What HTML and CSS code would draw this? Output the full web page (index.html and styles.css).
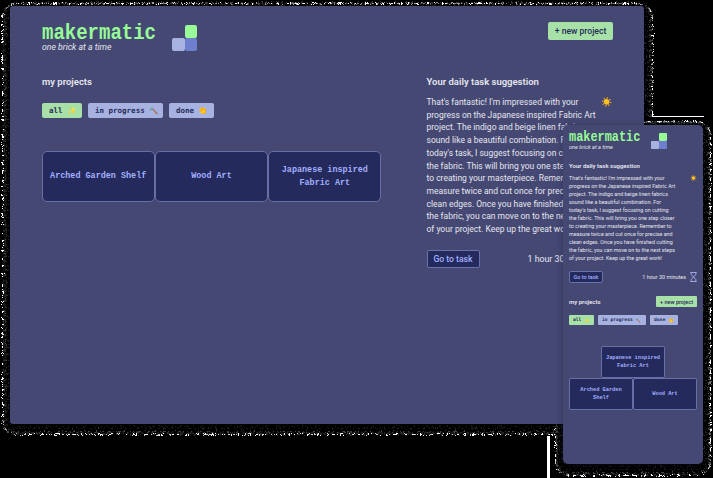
FILE: index.html
```html
<!DOCTYPE html>
<html lang="en">
<head>
<meta charset="utf-8">
<title>makermatic</title>
<link rel="stylesheet" href="styles.css">
</head>
<body>
<main class="stage">
  <svg class="grain" width="713" height="478" viewBox="0 0 713 478" fill="none" aria-hidden="true">
    <defs><filter id="scatter" filterUnits="userSpaceOnUse" x="0" y="0" width="713" height="478"><feTurbulence type="fractalNoise" baseFrequency=".9" numOctaves="1" seed="4"/><feDisplacementMap in="SourceGraphic" scale="5" xChannelSelector="R" yChannelSelector="G"/></filter></defs>
    <g filter="url(#scatter)">
      <g stroke="#2c2c2c">
        <rect x="8.5" y="5.5" width="637" height="421" rx="8" stroke-dasharray="1 3 1 2 1 5"/>
        <rect x="6.5" y="4.5" width="641" height="424" rx="10" stroke-dasharray="1 2 1 4 2 3"/>
        <rect x="5.500" y="3.5" width="644" height="428" rx="12" stroke="#484848" stroke-dasharray="1 3 2 2 1 4 1 1"/>
      </g>
      <rect x="4" y="3" width="647" height="430" rx="14" stroke="#666" stroke-dasharray="1 2 2 3 1 1"/>
    </g>
    <rect x="2.5" y="3.5" width="650" height="431" rx="14" stroke="#fff" stroke-dasharray="3 2 1 3 6 2 1 1 4 3" filter="url(#scatter)"/>
    <path d="M652 116.500H704" stroke="#fff"/>
    <path d="M548.500 436V478" stroke="#fff" stroke-width="3"/>
  </svg>

  <section class="window desktop">
    <header class="top">
      <div class="brand">
        <div><h1 class="logo">makermatic</h1><p class="tag">one brick at a time</p></div>
        <div class="bricks"><i></i><i></i><i></i></div>
      </div>
      <button class="btn new">+ new project</button>
    </header>
    <div class="columns">
      <section class="projects">
        <h2>my projects</h2>
        <div class="filters"><span class="chip on">all <b>✨</b></span><span class="chip">in progress <b>🔨</b></span><span class="chip">done <b>👏</b></span></div>
        <div class="wall"><div class="card">Arched Garden Shelf</div><div class="card">Wood Art</div><div class="card">Japanese inspired<br>Fabric Art</div></div>
      </section>
      <section class="task">
        <h2>Your daily task suggestion</h2>
        <div class="message">
          <p>That's fantastic! I'm impressed with your<br>progress on the Japanese inspired Fabric Art<br>project. The indigo and beige linen fabrics<br>sound like a beautiful combination. For<br>today's task, I suggest focusing on cutting<br>the fabric. This will bring you one step closer<br>to creating your masterpiece. Remember to<br>measure twice and cut once for precise and<br>clean edges. Once you have finished cutting<br>the fabric, you can move on to the next steps<br>of your project. Keep up the great work!</p>
          <span class="sun">☀️</span>
        </div>
        <div class="actions"><button class="btn go">Go to task</button><span class="time">1 hour 30 minutes</span></div>
      </section>
    </div>
  </section>

  <svg class="grain" width="713" height="478" viewBox="0 0 713 478" fill="none" aria-hidden="true">
    <defs><clipPath id="outside"><path d="M644 116H713V478H552V424H644Z"/></clipPath></defs>
    <g clip-path="url(#outside)">
      <rect x="560" y="122" width="146" height="349" rx="12" stroke="#000" stroke-width="10"/>
      <g filter="url(#scatter)">
        <g stroke="#2c2c2c">
          <rect x="561.500" y="123.500" width="143" height="343" rx="8" stroke-dasharray="1 3 1 2 1 5"/>
          <rect x="559.500" y="122.500" width="147" height="347" rx="10" stroke-dasharray="1 2 1 4 2 3"/>
          <rect x="557.500" y="122.500" width="151" height="350" rx="12" stroke="#484848" stroke-dasharray="1 3 2 2 1 4 1 1"/>
        </g>
        <rect x="556.500" y="122" width="153" height="352" rx="14" stroke="#666" stroke-dasharray="1 2 2 3 1 1"/>
        <rect x="555.500" y="121.500" width="155" height="354" rx="14" stroke="#fff" stroke-dasharray="3 2 1 3 6 2 1 1 4 3"/>
      </g>
    </g>
  </svg>

  <section class="window mobile">
    <header class="brand">
      <div><h1 class="logo">makermatic</h1><p class="tag">one brick at a time</p></div>
      <div class="bricks"><i></i><i></i><i></i></div>
    </header>
    <section class="task">
      <h2>Your daily task suggestion</h2>
      <div class="message">
        <p>That's fantastic! I'm impressed with your<br>progress on the Japanese inspired Fabric Art<br>project. The indigo and beige linen fabrics<br>sound like a beautiful combination. For<br>today's task, I suggest focusing on cutting<br>the fabric. This will bring you one step closer<br>to creating your masterpiece. Remember to<br>measure twice and cut once for precise and<br>clean edges. Once you have finished cutting<br>the fabric, you can move on to the next steps<br>of your project. Keep up the great work!</p>
        <span class="sun">☀️</span>
      </div>
      <div class="actions"><button class="btn go">Go to task</button><span class="time">1 hour 30 minutes</span>
        <svg class="glass" viewBox="0 0 7 10" fill="none" stroke="#a8b2ee" stroke-width=".9"><path d="M.3.500H6.700M.3 9.500H6.700M1.200.500V2.500L3.500 5L5.800 2.500V.500M1.200 9.500V7.500L3.500 5L5.800 7.500V9.500"/></svg>
      </div>
    </section>
    <section class="projects">
      <div class="row"><h2>my projects</h2><button class="btn new">+ new project</button></div>
      <div class="filters"><span class="chip on">all <b>✨</b></span><span class="chip">in progress <b>🔨</b></span><span class="chip">done <b>👏</b></span></div>
      <div class="wall"><div class="card">Arched Garden<br>Shelf</div><div class="card">Wood Art</div><div class="card">Japanese inspired<br>Fabric Art</div></div>
    </section>
  </section>
</main>
</body>
</html>
```
FILE: styles.css
```css
* { box-sizing: border-box; }
body { margin: 0; background: #000; font-family: Roboto, sans-serif; }
h1, h2, p { margin: 0; }
.stage { position: relative; width: 713px; height: 478px; overflow: hidden; }
.grain { position: absolute; left: 0; top: 0; }
.window { position: absolute; background: #444872; color: #e6e6f0; white-space: nowrap; }
.desktop { left: 10px; top: 6px; width: 634px; height: 418px; border-radius: 3px; padding: 17px 31px 0 32px; }
.mobile { left: 563px; top: 125px; width: 140px; height: 339px; border-radius: 5px; padding: 7px 6px 0; box-shadow: -1px 0 6px rgba(35, 38, 75, .35); }

.top, .brand, .row, .actions, .message, .filters { display: flex; }
.top { justify-content: space-between; height: 53px; }
.brand { align-items: flex-start; }
.logo { font: bold 19px/18px "Liberation Mono", monospace; color: #98fb98; transform: translateY(1.500px) scaleY(1.2); transform-origin: 0 14px; }
.tag { font-size: 8.700px; line-height: 10px; font-style: italic; margin-top: 1px; }
.bricks { display: grid; grid-template: repeat(2, 13px) / repeat(2, 12.500px); margin: 2px 0 0 16px; }
.bricks i { background: #a8b2e1; border-radius: 2px; }
.bricks i:first-child { grid-column: 2; background: #98fb98; }
.bricks i:last-child { background: #6e7fcd; }

.btn { font-family: inherit; font-weight: 500; border: 0; padding: 0; border-radius: 2px; text-align: center; }
.new { width: 65px; height: 18px; margin-top: -1px; background: #a8e1a7; color: #252b59; font-size: 8.600px; }
.go { width: 53px; height: 18px; background: #242a5b; border: 1px solid #6972aa; color: #a3afff; font-size: 8.600px; }
h2 { font-size: 9.500px; line-height: 12px; font-weight: 600; }

.columns { display: grid; grid-template-columns: 384.500px 186.500px; }
.filters { gap: 6px; margin-top: 14.500px; }
.chip { display: flex; align-items: center; height: 15px; width: 45px; padding: 0 0 0 7px; border-radius: 2px; background: #a8b2e1; color: #252b59; font: bold 7.500px/15px "DejaVu Sans Mono", monospace; white-space: pre; }
.chip b { font: 7.500px "Noto Color Emoji", sans-serif; }
.chip:nth-child(2) { width: 75px; }
.chip.on { background: #a8e1a7; width: 40px; }
.wall { display: flex; flex-wrap: wrap-reverse; justify-content: center; margin-top: 33.500px; width: 340px; }
.desktop .wall { margin-left: -.5px; }
.card { display: flex; align-items: center; justify-content: center; text-align: center; width: 113.300px; height: 51px; background: #242a5b; border: 1px solid #6670a6; border-radius: 5px; color: #a3afff; font: bold 8.450px/12.500px "Liberation Mono", monospace; }

.message { justify-content: space-between; margin-top: 8px; }
.message p { font-size: 8.500px; line-height: 12.700px; }
.sun { font: 9px/12px "Noto Color Emoji", sans-serif; }
.desktop .actions { margin-top: 14px; align-items: center; }
.time { font-size: 8.800px; margin-left: 48px; }

.mobile .brand { height: 30px; }
.mobile .logo { font-size: 11.900px; line-height: 11px; transform: translateY(1px) scaleY(1.2); transform-origin: 0 9px; }
.mobile .tag { font-size: 5.500px; line-height: 6px; margin-top: 1px; }
.mobile .bricks { grid-template: repeat(2, 8px) / repeat(2, 8px); margin: 1px 0 0 10.500px; }
.mobile .bricks i { border-radius: 1px; }
.mobile h2 { font-size: 6px; line-height: 8px; }
.mobile .message { margin-top: 4px; }
.mobile .message p { font-size: 5.350px; line-height: 8px; }
.mobile .sun { font-size: 5.500px; line-height: 8px; }
.mobile .actions { margin-top: 9px; align-items: center; }
.mobile .go { width: 34px; height: 12px; font-size: 5.500px; }
.mobile .time { font-size: 5.450px; margin-left: auto; }
.glass { width: 7px; height: 10px; margin-left: 4px; }
.mobile .row { justify-content: space-between; align-items: center; margin-top: 13px; }
.mobile .new { width: 41px; height: 11px; margin: 0; font-size: 5.500px; border-radius: 1px; }
.mobile .filters { gap: 4px; margin-top: 8px; }
.mobile .chip { width: 28px; height: 10px; font-size: 4.650px; line-height: 10px; padding-left: 4px; border-radius: 1px; }
.mobile .chip:nth-child(2) { width: 48px; }
.mobile .chip.on { width: 25px; }
.mobile .chip b { font-size: 4.650px; }
.mobile .wall { width: 128px; margin-top: 21px; }
.mobile .card { width: 64px; height: 32px; border-radius: 2px; font-size: 5.300px; line-height: 8px; }
```
